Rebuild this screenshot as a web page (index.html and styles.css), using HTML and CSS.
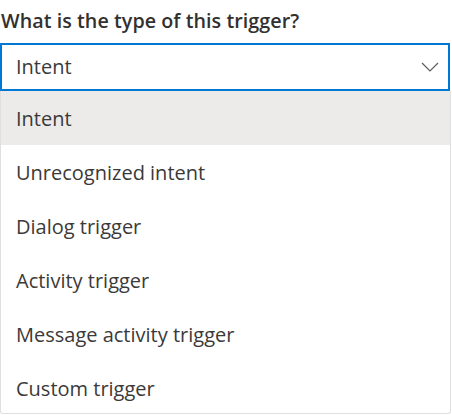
FILE: index.html
```html
<!DOCTYPE html>
<html>
<head>
<meta charset="utf-8">
<link rel="stylesheet" href="styles.css">
</head>
<body>
<div class="field">
  <label class="label">What is the type of this trigger?</label>
  <div class="select">
    <span class="value">Intent</span>
    <svg class="chev" width="18" height="10" viewBox="0 0 18 10"><path d="M1 1 L9 9 L17 1" fill="none" stroke="#605e5c" stroke-width="1.2"/></svg>
  </div>
  <ul class="menu">
    <li class="item selected">Intent</li>
    <li class="item">Unrecognized intent</li>
    <li class="item">Dialog trigger</li>
    <li class="item">Activity trigger</li>
    <li class="item">Message activity trigger</li>
    <li class="item">Custom trigger</li>
  </ul>
</div>
</body>
</html>
```
FILE: styles.css
```css
html, body {
  margin: 0;
  padding: 0;
  background: #ffffff;
}
body {
  font-family: "Open Sans", "Noto Sans", sans-serif;
  color: #323130;
  width: 452px;
  height: 415px;
  overflow: hidden;
}
.field {
  display: flex;
  flex-direction: column;
  width: 451px;
}
.label {
  font-size: 19.7px;
  font-weight: 600;
  line-height: 26px;
  padding: 8px 0 0 1px;
  height: 43px;
  box-sizing: border-box;
  letter-spacing: 0.05px;
}
.select {
  width: 450px;
  height: 48px;
  box-sizing: border-box;
  border: 2px solid #0078d4;
  display: flex;
  align-items: center;
  justify-content: space-between;
  padding: 0 9px 0 14px;
}
.value {
  font-size: 20px;
  line-height: 26px;
  color: #3b3a39;
}
.chev {
  display: block;
}
.menu {
  list-style: none;
  margin: 0;
  padding: 0;
  border: 1px solid #e1dfdd;
  border-top: none;
  border-radius: 0 0 3px 3px;
  height: 323px;
  box-sizing: border-box;
}
.item {
  height: 54px;
  display: flex;
  align-items: center;
  padding-left: 15px;
  font-size: 20px;
  color: #3b3a39;
}
.item.selected {
  background: #edebe9;
}
```
